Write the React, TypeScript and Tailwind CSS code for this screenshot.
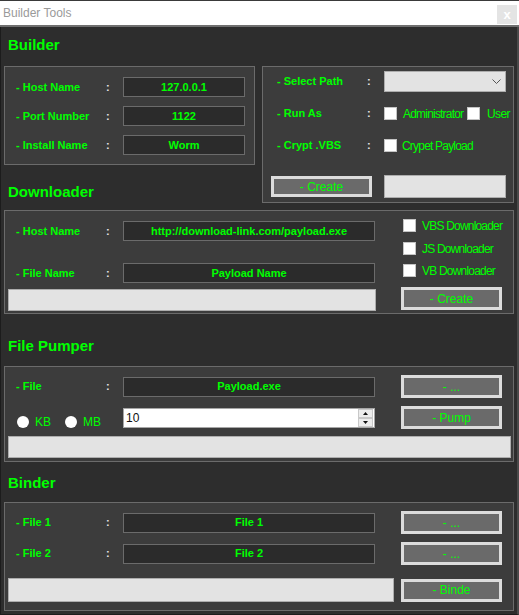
import React from "react";

const green = "text-[#00ff00]";

function Label({ children }: { children: React.ReactNode }) {
  return <span className={`w-[90px] shrink-0 text-[11px] font-bold leading-[13px] ${green}`}>{children}</span>;
}

function Colon() {
  return <span className="w-[17px] shrink-0 text-[11px] font-bold leading-[13px] text-[#e6e6e6]">:</span>;
}

function Field({ children, wide }: { children: React.ReactNode; wide?: boolean }) {
  return (
    <div
      className={`${wide ? "w-[252px]" : "w-[122px]"} h-[20px] shrink-0 border border-[#6b6b6b] bg-[#2b2b2b] flex items-center justify-center text-[11px] font-bold ${green}`}
    >
      {children}
    </div>
  );
}

function Btn({ children, className = "" }: { children: React.ReactNode; className?: string }) {
  return (
    <div
      className={`w-[101px] shrink-0 border-[3px] border-[#dcdcdc] bg-[#6a6a6a] flex items-center justify-center text-[12px] leading-[14px] ${green} ${className}`}
    >
      {children}
    </div>
  );
}

function Box({ className = "" }: { className?: string }) {
  return <div className={`shrink-0 border border-[#adadad] bg-[#e3e3e3] ${className}`} />;
}

function Check() {
  return <div className="w-[13px] h-[13px] shrink-0 bg-white border border-[#c4c4c4]" />;
}

function Radio() {
  return <div className="w-[12px] h-[12px] shrink-0 rounded-full bg-white" />;
}

function Heading({ children, className }: { children: React.ReactNode; className: string }) {
  return (
    <div className={`pl-[4px] text-[15px] font-bold leading-[16px] ${green} ${className}`}>{children}</div>
  );
}

export default function App() {
  return (
    <div className="w-[519px] h-[615px] overflow-hidden bg-[#2d2d2d] font-['Liberation_Sans',Arial,sans-serif] flex flex-col">
      {/* title bar */}
      <div className="h-[25px] shrink-0 bg-white border-t border-[#3a3a3a] flex items-center justify-between pl-[3px] pr-[2px]">
        <span className="text-[12px] text-[#9a9a9a]">Builder Tools</span>
        <div className="w-[20px] h-[19px] mt-[2px] bg-[#e4e4e4] flex items-center justify-center text-[13px] font-bold leading-none text-white">
          x
        </div>
      </div>
      <div className="h-[2px] shrink-0 bg-[#6f6f6f]" />

      <div className="flex-1 border-l border-l-[#1c1c1c] border-r-2 border-r-[#4a4a4a] border-b border-b-[#1c1c1c] pl-[3px]">
        {/* top row */}
        <div className="flex">
          <div className="w-[251px] shrink-0">
            <Heading className="h-[39px] pt-[10px]">Builder</Heading>
            <div className="h-[99px] border border-[#6b6b6b] bg-[#3c3c3c] pt-[10px] pl-[11px] flex flex-col gap-[9px]">
              <div className="h-[20px] flex items-center">
                <Label>- Host Name</Label>
                <Colon />
                <Field>127.0.0.1</Field>
              </div>
              <div className="h-[20px] flex items-center">
                <Label>- Port Number</Label>
                <Colon />
                <Field>1122</Field>
              </div>
              <div className="h-[20px] flex items-center">
                <Label>- Install Name</Label>
                <Colon />
                <Field>Worm</Field>
              </div>
            </div>
            <Heading className="h-[45px] pt-[19px]">Downloader</Heading>
          </div>

          <div className="ml-[7px] mt-[39px] w-[252px] h-[137px] border border-[#6b6b6b] bg-[#3c3c3c] pt-[4px] pl-[14px]">
            <div className="h-[21px] flex items-center">
              <Label>- Select Path</Label>
              <Colon />
              <div className="w-[122px] h-[21px] border border-[#adadad] bg-[#e3e3e3] flex items-center justify-end pr-[4px]">
                <svg width="9" height="6" viewBox="0 0 9 6">
                  <polyline points="0.5,0.5 4.5,4.5 8.5,0.5" fill="none" stroke="#555" strokeWidth="1" />
                </svg>
              </div>
            </div>
            <div className="mt-[11px] h-[21px] flex items-center">
              <Label>- Run As</Label>
              <Colon />
              <Check />
              <span className={`ml-[6px] w-[64px] text-[12px] tracking-[-0.8px] ${green}`}>Administrator</span>
              <Check />
              <span className={`ml-[7px] text-[12px] tracking-[-0.6px] ${green}`}>User</span>
            </div>
            <div className="mt-[11px] h-[21px] flex items-center">
              <Label>- Crypt .VBS</Label>
              <Colon />
              <Check />
              <span className={`ml-[5px] text-[12px] tracking-[-0.8px] ${green}`}>Crypet Payload</span>
            </div>
            <div className="mt-[19px] h-[23px] flex items-center">
              <Btn className="ml-[-6px] h-[21px]">- Create</Btn>
              <Box className="ml-[12px] w-[122px] h-[23px]" />
            </div>
          </div>
        </div>

        {/* downloader */}
        <div className="w-[510px] h-[104px] border border-[#6b6b6b] bg-[#3c3c3c] flex">
          <div className="w-[396px] shrink-0 pt-[10px]">
            <div className="h-[20px] pl-[11px] flex items-center">
              <Label>- Host Name</Label>
              <Colon />
              <Field wide>http://download-link.com/payload.exe</Field>
            </div>
            <div className="mt-[22px] h-[20px] pl-[11px] flex items-center">
              <Label>- File Name</Label>
              <Colon />
              <Field wide>Payload Name</Field>
            </div>
            <Box className="mt-[6px] ml-[3px] w-[368px] h-[22px]" />
          </div>
          <div className="pt-[8px]">
            <div className="h-[13px] ml-[2px] flex items-center">
              <Check />
              <span className={`ml-[6px] text-[12px] tracking-[-0.8px] ${green}`}>VBS Downloader</span>
            </div>
            <div className="mt-[10px] h-[13px] ml-[2px] flex items-center">
              <Check />
              <span className={`ml-[6px] text-[12px] tracking-[-0.8px] ${green}`}>JS Downloader</span>
            </div>
            <div className="mt-[9px] h-[13px] ml-[2px] flex items-center">
              <Check />
              <span className={`ml-[6px] text-[12px] tracking-[-0.8px] ${green}`}>VB Downloader</span>
            </div>
            <Btn className="mt-[10px] h-[23px]">- Create</Btn>
          </div>
        </div>

        {/* file pumper */}
        <Heading className="h-[52px] pt-[24px]">File Pumper</Heading>
        <div className="w-[510px] h-[96px] border border-[#6b6b6b] bg-[#3c3c3c] pt-[8px]">
          <div className="h-[23px] pl-[11px] flex items-center">
            <Label>- File</Label>
            <Colon />
            <Field wide>Payload.exe</Field>
            <Btn className="ml-[26px] h-[23px]">- ...</Btn>
          </div>
          <div className="mt-[8px] h-[23px] pl-[11px] flex items-center">
            <div className={`w-[107px] shrink-0 pt-[8px] flex items-center text-[12px] ${green}`}>
              <div className="ml-[1px]">
                <Radio />
              </div>
              <span className="ml-[6px]">KB</span>
              <div className="ml-[14px]">
                <Radio />
              </div>
              <span className="ml-[6px]">MB</span>
            </div>
            <div className="w-[252px] h-[20px] shrink-0 border border-[#a6a6a6] bg-white flex items-center">
              <span className="flex-1 pl-[2px] text-[12px] text-[#111]">10</span>
              <div className="w-[15px] h-[18px] mr-[1px] flex flex-col">
                <div className="h-[9px] bg-[#ececec] border border-[#c8c8c8] flex items-center justify-center">
                  <svg width="5" height="3" viewBox="0 0 5 3">
                    <polygon points="0,3 2.5,0 5,3" fill="#111" />
                  </svg>
                </div>
                <div className="h-[9px] bg-[#ececec] border border-[#c8c8c8] flex items-center justify-center">
                  <svg width="5" height="3" viewBox="0 0 5 3">
                    <polygon points="0,0 2.5,3 5,0" fill="#111" />
                  </svg>
                </div>
              </div>
            </div>
            <Btn className="ml-[26px] h-[23px]">- Pump</Btn>
          </div>
          <Box className="mt-[7px] ml-[3px] w-[503px] h-[22px]" />
        </div>

        {/* binder */}
        <Heading className="h-[40px] pt-[13px]">Binder</Heading>
        <div className="w-[510px] h-[109px] border border-[#6b6b6b] bg-[#3c3c3c] pt-[8px]">
          <div className="h-[23px] pl-[11px] flex items-center">
            <Label>- File 1</Label>
            <Colon />
            <Field wide>File 1</Field>
            <Btn className="ml-[26px] h-[23px]">- ...</Btn>
          </div>
          <div className="mt-[8px] h-[23px] pl-[11px] flex items-center">
            <Label>- File 2</Label>
            <Colon />
            <Field wide>File 2</Field>
            <Btn className="ml-[26px] h-[23px]">- ...</Btn>
          </div>
          <div className="mt-[13px] h-[24px] flex items-center">
            <Box className="ml-[3px] w-[386px] h-[24px]" />
            <Btn className="ml-[7px] h-[23px]">- Binde</Btn>
          </div>
        </div>
      </div>
    </div>
  );
}
